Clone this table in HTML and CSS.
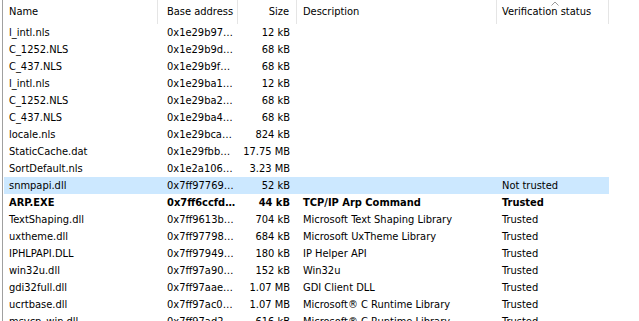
FILE: index.html
```html
<!DOCTYPE html>
<html>
<head>
<meta charset="utf-8">
<link rel="stylesheet" href="styles.css">
</head>
<body>
<div class="list">
  <div class="row head">
    <div class="c name">Name</div>
    <div class="c addr">Base address</div>
    <div class="c size">Size</div>
    <div class="c desc">Description</div>
    <div class="c ver sorted">Verification status
      <svg class="arrow" width="8" height="5" viewBox="0 0 8 5"><path d="M0.5 4.5 L4 1 L7.5 4.5" fill="none" stroke="#9a9a9a" stroke-width="1"/></svg>
    </div>
  </div>
  <div class="row"><div class="c name">l_intl.nls</div><div class="c addr">0x1e29b97…</div><div class="c size">12 kB</div><div class="c desc"></div><div class="c ver"></div></div>
  <div class="row"><div class="c name">C_1252.NLS</div><div class="c addr">0x1e29b9d…</div><div class="c size">68 kB</div><div class="c desc"></div><div class="c ver"></div></div>
  <div class="row"><div class="c name">C_437.NLS</div><div class="c addr">0x1e29b9f…</div><div class="c size">68 kB</div><div class="c desc"></div><div class="c ver"></div></div>
  <div class="row"><div class="c name">l_intl.nls</div><div class="c addr">0x1e29ba1…</div><div class="c size">12 kB</div><div class="c desc"></div><div class="c ver"></div></div>
  <div class="row"><div class="c name">C_1252.NLS</div><div class="c addr">0x1e29ba2…</div><div class="c size">68 kB</div><div class="c desc"></div><div class="c ver"></div></div>
  <div class="row"><div class="c name">C_437.NLS</div><div class="c addr">0x1e29ba4…</div><div class="c size">68 kB</div><div class="c desc"></div><div class="c ver"></div></div>
  <div class="row"><div class="c name">locale.nls</div><div class="c addr">0x1e29bca…</div><div class="c size">824 kB</div><div class="c desc"></div><div class="c ver"></div></div>
  <div class="row"><div class="c name">StaticCache.dat</div><div class="c addr">0x1e29fbb…</div><div class="c size">17.75 MB</div><div class="c desc"></div><div class="c ver"></div></div>
  <div class="row"><div class="c name">SortDefault.nls</div><div class="c addr">0x1e2a106…</div><div class="c size">3.23 MB</div><div class="c desc"></div><div class="c ver"></div></div>
  <div class="row selected"><div class="c name">snmpapi.dll</div><div class="c addr">0x7ff97769…</div><div class="c size">52 kB</div><div class="c desc"></div><div class="c ver">Not trusted</div></div>
  <div class="row bold"><div class="c name">ARP.EXE</div><div class="c addr">0x7ff6ccfd…</div><div class="c size">44 kB</div><div class="c desc">TCP/IP Arp Command</div><div class="c ver">Trusted</div></div>
  <div class="row"><div class="c name">TextShaping.dll</div><div class="c addr">0x7ff9613b…</div><div class="c size">704 kB</div><div class="c desc">Microsoft Text Shaping Library</div><div class="c ver">Trusted</div></div>
  <div class="row"><div class="c name">uxtheme.dll</div><div class="c addr">0x7ff97798…</div><div class="c size">684 kB</div><div class="c desc">Microsoft UxTheme Library</div><div class="c ver">Trusted</div></div>
  <div class="row"><div class="c name">IPHLPAPI.DLL</div><div class="c addr">0x7ff97949…</div><div class="c size">180 kB</div><div class="c desc">IP Helper API</div><div class="c ver">Trusted</div></div>
  <div class="row"><div class="c name">win32u.dll</div><div class="c addr">0x7ff97a90…</div><div class="c size">152 kB</div><div class="c desc">Win32u</div><div class="c ver">Trusted</div></div>
  <div class="row"><div class="c name">gdi32full.dll</div><div class="c addr">0x7ff97aae…</div><div class="c size">1.07 MB</div><div class="c desc">GDI Client DLL</div><div class="c ver">Trusted</div></div>
  <div class="row"><div class="c name">ucrtbase.dll</div><div class="c addr">0x7ff97ac0…</div><div class="c size">1.07 MB</div><div class="c desc">Microsoft® C Runtime Library</div><div class="c ver">Trusted</div></div>
  <div class="row"><div class="c name">msvcp_win.dll</div><div class="c addr">0x7ff97ad2…</div><div class="c size">616 kB</div><div class="c desc">Microsoft® C Runtime Library</div><div class="c ver">Trusted</div></div>
</div>
</body>
</html>
```
FILE: styles.css
```css
html, body {
  margin: 0;
  padding: 0;
  background: #ffffff;
  overflow: hidden;
}
body {
  width: 639px;
  height: 321px;
  font-family: "DejaVu Sans Condensed", "DejaVu Sans", sans-serif;
  font-size: 11px;
  color: #000000;
}
.list {
  margin-left: 2px;
  border-left: 1px solid #a0a0a0;
  height: 321px;
  overflow: hidden;
}
.row {
  display: grid;
  grid-template-columns: 154px 80px 59px 200px 112px;
  height: 17px;
  line-height: 17px;
  margin-left: 1px;
  width: 605px;
}
.row.head {
  height: 24px;
  line-height: 24px;
  position: relative;
}
.row.head .c {
  border-right: 1px solid #e5e5e5;
  height: 24px;
}
.c {
  white-space: nowrap;
  overflow: hidden;
  box-sizing: border-box;
}
.name { padding-left: 5px; }
.addr { padding-left: 9px; }
.size { text-align: right; padding-right: 7px; }
.desc { padding-left: 6px; }
.ver { padding-left: 5px; }
.sorted { position: relative; overflow: visible; }
.arrow {
  position: absolute;
  left: 54px;
  top: 1px;
}
.selected { background: #cce8ff; }
.bold { font-weight: bold; }
```
